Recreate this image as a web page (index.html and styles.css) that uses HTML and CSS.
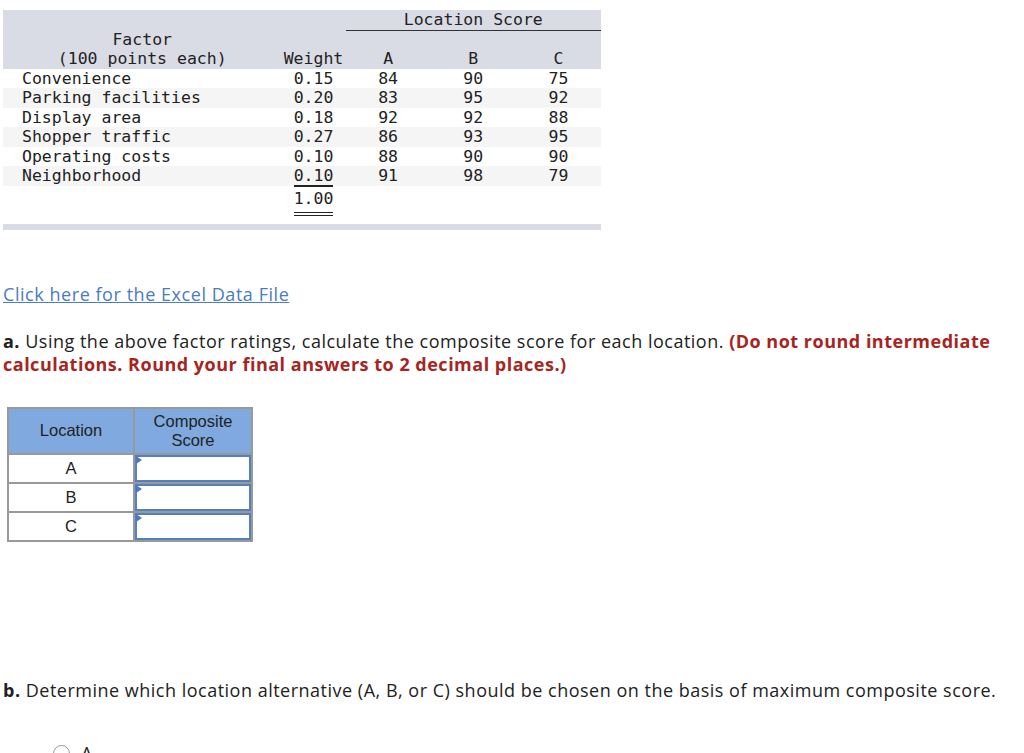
FILE: index.html
```html
<!DOCTYPE html>
<html lang="en">
<head>
<meta charset="utf-8">
<title>Location factor rating</title>
<link rel="stylesheet" href="styles.css">
</head>
<body>
<div class="page">
  <table class="ratings">
    <colgroup>
      <col class="c-factor"><col class="c-weight"><col class="c-score"><col class="c-score"><col class="c-score">
    </colgroup>
    <thead>
      <tr class="h1">
        <th rowspan="2" class="factor-h">Factor<br>(100 points each)</th>
        <th rowspan="2" class="weight-h">Weight</th>
        <th colspan="3" class="locscore">Location Score</th>
      </tr>
      <tr class="h2">
        <th>A</th><th>B</th><th>C</th>
      </tr>
    </thead>
    <tbody>
      <tr><td class="name">Convenience</td><td>0.15</td><td>84</td><td>90</td><td>75</td></tr>
      <tr class="alt"><td class="name">Parking facilities</td><td>0.20</td><td>83</td><td>95</td><td>92</td></tr>
      <tr><td class="name">Display area</td><td>0.18</td><td>92</td><td>92</td><td>88</td></tr>
      <tr class="alt"><td class="name">Shopper traffic</td><td>0.27</td><td>86</td><td>93</td><td>95</td></tr>
      <tr><td class="name">Operating costs</td><td>0.10</td><td>88</td><td>90</td><td>90</td></tr>
      <tr class="alt"><td class="name">Neighborhood</td><td><span class="under">0.10</span></td><td>91</td><td>98</td><td>79</td></tr>
      <tr class="total"><td></td><td><span class="dbl">1.00</span></td><td></td><td></td><td></td></tr>
    </tbody>
    <tfoot>
      <tr class="foot"><td colspan="5"></td></tr>
    </tfoot>
  </table>

  <p class="link-line"><a href="#" class="excel">Click here for the Excel Data File</a></p>

  <p class="question"><b>a.</b> Using the above factor ratings, calculate the composite score for each location. <span class="hint">(Do not round intermediate calculations. Round your final answers to 2 decimal places.)</span></p>

  <table class="answers">
    <thead>
      <tr><th class="loc">Location</th><th class="comp">Composite<br>Score</th></tr>
    </thead>
    <tbody>
      <tr><td class="loc">A</td><td class="inp"><div class="box"></div></td></tr>
      <tr><td class="loc">B</td><td class="inp"><div class="box"></div></td></tr>
      <tr><td class="loc">C</td><td class="inp"><div class="box"></div></td></tr>
    </tbody>
  </table>

  <p class="question q-b"><b>b.</b> Determine which location alternative (A, B, or C) should be chosen on the basis of maximum composite score.</p>

  <div class="choice"><span class="radio"></span><span class="choice-label">A</span></div>
</div>
</body>
</html>
```

FILE: styles.css
```css
html, body {
  margin: 0;
  padding: 0;
  background: #fff;
}

.page {
  padding: 10px 3px 0 3px;
  font-family: "Open Sans", "Liberation Sans", sans-serif;
  color: #222;
}

.ratings {
  border-collapse: collapse;
  border-spacing: 0;
  width: 598px;
  table-layout: fixed;
  font-family: "DejaVu Sans Mono", monospace;
  font-size: 16.5px;
  line-height: 19.5px;
  color: #222;
}

.c-factor { width: 278px; }
.c-weight { width: 64px; }
.c-score { width: 85px; }

.ratings th {
  font-weight: normal;
  background: #d9dce5;
  padding: 0;
  text-align: center;
  vertical-align: bottom;
}

.ratings .h1 th.locscore {
  height: 19px;
  border-bottom: 1px solid #333;
  vertical-align: top;
}

.ratings .h2 th {
  height: 38px;
}

.ratings td {
  padding: 0;
  text-align: center;
  height: 19.5px;
}

.ratings td.name {
  text-align: left;
  padding-left: 19px;
}

.ratings tr.alt td {
  background: #f5f5f5;
}

.under {
  border-bottom: 2px solid #222;
}

.ratings tr.total td {
  height: 28px;
  padding-top: 3px;
  vertical-align: top;
}

.dbl {
  display: inline-block;
  padding-bottom: 4px;
  border-bottom: 4px double #222;
}

.ratings tr.foot td {
  height: 6px;
  padding: 0;
  background: #d9dce5;
}

.ratings tfoot tr.foot {
  border-top: 7px solid #fff;
}

.link-line {
  margin: 53px 0 0 0;
  font-size: 18px;
  line-height: 23px;
  letter-spacing: 0.55px;
}

.excel {
  color: #4a7cc2;
  text-decoration: underline;
}

.question {
  margin: 24px 0 0 0;
  font-size: 18px;
  line-height: 23px;
  letter-spacing: 0.5px;
  color: #222;
}

.question b {
  font-weight: bold;
}

.hint {
  color: #a8241e;
  font-weight: bold;
}

.answers {
  margin: 31px 0 0 4px;
  border-collapse: collapse;
  font-family: "Liberation Sans", Arial, sans-serif;
  font-size: 16.5px;
  color: #222;
}

.answers th, .answers td {
  border: 2px solid #999;
  padding: 0;
  text-align: center;
}

.answers th {
  font-weight: normal;
  background: #80a9df;
  height: 44px;
  line-height: 19px;
}

.answers th.loc, .answers td.loc {
  width: 124px;
}

.answers th.comp, .answers td.inp {
  width: 116px;
}

.answers td.loc {
  height: 27px;
  background: #fff;
}

.answers td.inp {
  padding: 0;
  vertical-align: middle;
}

.box {
  position: relative;
  height: 23px;
  margin: 0;
  border: 2px solid #5380c0;
  background: #fff;
}

.box::before {
  content: "";
  position: absolute;
  left: -1px;
  top: -1px;
  border-left: 6px solid #4b78c0;
  border-top: 4px solid transparent;
  border-bottom: 4px solid transparent;
}

.q-b {
  margin-top: 137px;
}

.choice {
  display: flex;
  align-items: center;
  gap: 11px;
  margin: 40px 0 0 50px;
  font-size: 18px;
  line-height: 23px;
}

.radio {
  width: 15px;
  height: 15px;
  border: 1px solid #999;
  border-radius: 50%;
  background: #fff;
}
```
